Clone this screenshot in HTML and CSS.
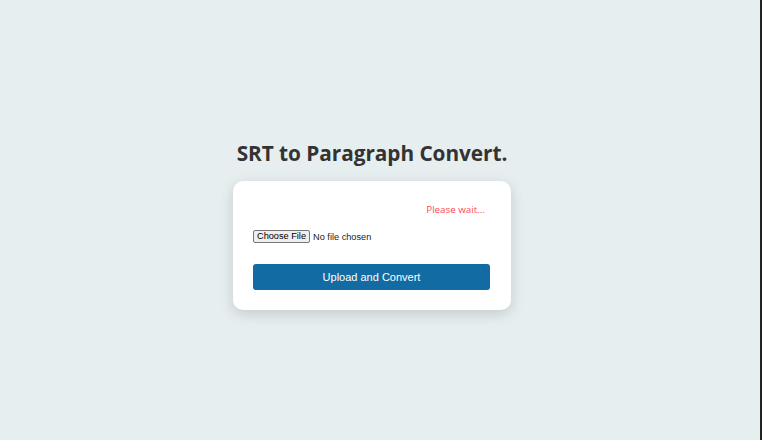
FILE: index.html
```html
<!DOCTYPE html>
<html>
<head>
<meta charset="utf-8">
<link rel="stylesheet" href="styles.css">
</head>
<body>
<div class="page">
  <main class="main">
    <h1 class="title">SRT to Paragraph Convert.</h1>
    <div class="card">
      <div class="status">Please wait...</div>
      <div class="file-row">
        <span class="file-btn">Choose File</span>
        <span class="file-text">No file chosen</span>
      </div>
      <button class="upload">Upload and Convert</button>
    </div>
  </main>
  <div class="edge"></div>
</div>
</body>
</html>
```

FILE: styles.css
```css
html, body {
  margin: 0;
  padding: 0;
  height: 100%;
}
body {
  background: #e6eef0;
  font-family: "Liberation Sans", Arial, sans-serif;
}
.page {
  display: flex;
  height: 440px;
}
.main {
  flex: 1;
  display: flex;
  flex-direction: column;
  align-items: center;
  padding-top: 139px;
  padding-right: 16px;
}
.edge {
  width: 2px;
  background: #23221f;
}
.title {
  margin: 0 0 14px;
  font-family: "Open Sans", "Noto Sans", sans-serif;
  font-weight: 700;
  font-size: 20.8px;
  letter-spacing: -0.05px;
  color: #333;
  line-height: 28px;
}
.card {
  width: 237px;
  background: #fff;
  border-radius: 10px;
  padding: 20px 21px 20px 20px;
  box-shadow: 0 4px 14px rgba(0,0,0,0.15);
}
.status {
  text-align: right;
  padding-right: 5px;
  color: #ff4b55;
  font-family: "Open Sans", sans-serif;
  font-weight: 500;
  font-size: 9.8px;
  line-height: 18px;
  margin-bottom: 11px;
}
.file-row {
  display: flex;
  align-items: center;
  gap: 3px;
  font-size: 9.2px;
  color: #222;
  margin-bottom: 21px;
}
.file-btn {
  background: #efefef;
  border: 1px solid #767676;
  border-radius: 2px;
  padding: 0 3px;
  line-height: 11px;
  color: #000;
}
.upload {
  display: block;
  width: 100%;
  height: 26px;
  border: none;
  border-radius: 3px;
  background: #126ba3;
  color: #fff;
  font-family: "Liberation Sans", Arial, sans-serif;
  font-size: 11px;
}
```
